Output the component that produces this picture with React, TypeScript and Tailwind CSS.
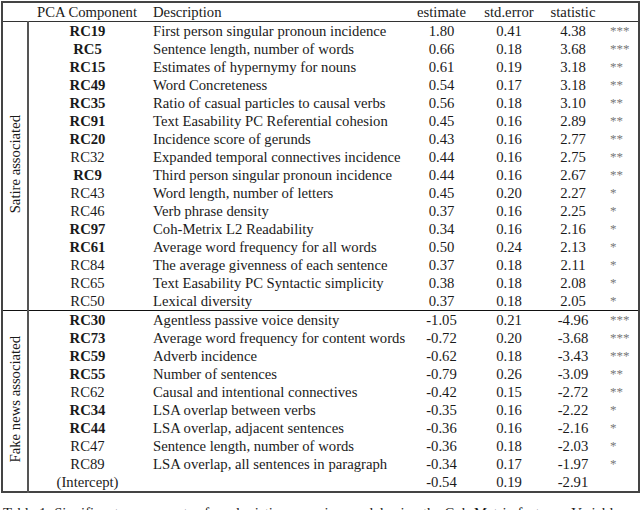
import React from 'react';

type Row = [string, boolean, string, string, string, string, string];

const satire: Row[] = [
  ['RC19', true, 'First person singular pronoun incidence', '1.80', '0.41', '4.38', '***'],
  ['RC5', true, 'Sentence length, number of words', '0.66', '0.18', '3.68', '***'],
  ['RC15', true, 'Estimates of hypernymy for nouns', '0.61', '0.19', '3.18', '**'],
  ['RC49', true, 'Word Concreteness', '0.54', '0.17', '3.18', '**'],
  ['RC35', true, 'Ratio of casual particles to causal verbs', '0.56', '0.18', '3.10', '**'],
  ['RC91', true, 'Text Easability PC Referential cohesion', '0.45', '0.16', '2.89', '**'],
  ['RC20', true, 'Incidence score of gerunds', '0.43', '0.16', '2.77', '**'],
  ['RC32', false, 'Expanded temporal connectives incidence', '0.44', '0.16', '2.75', '**'],
  ['RC9', true, 'Third person singular pronoun incidence', '0.44', '0.16', '2.67', '**'],
  ['RC43', false, 'Word length, number of letters', '0.45', '0.20', '2.27', '*'],
  ['RC46', false, 'Verb phrase density', '0.37', '0.16', '2.25', '*'],
  ['RC97', true, 'Coh-Metrix L2 Readability', '0.34', '0.16', '2.16', '*'],
  ['RC61', true, 'Average word frequency for all words', '0.50', '0.24', '2.13', '*'],
  ['RC84', false, 'The average givenness of each sentence', '0.37', '0.18', '2.11', '*'],
  ['RC65', false, 'Text Easability PC Syntactic simplicity', '0.38', '0.18', '2.08', '*'],
  ['RC50', false, 'Lexical diversity', '0.37', '0.18', '2.05', '*'],
];

const fake: Row[] = [
  ['RC30', true, 'Agentless passive voice density', '-1.05', '0.21', '-4.96', '***'],
  ['RC73', true, 'Average word frequency for content words', '-0.72', '0.20', '-3.68', '***'],
  ['RC59', true, 'Adverb incidence', '-0.62', '0.18', '-3.43', '***'],
  ['RC55', true, 'Number of sentences', '-0.79', '0.26', '-3.09', '**'],
  ['RC62', false, 'Causal and intentional connectives', '-0.42', '0.15', '-2.72', '**'],
  ['RC34', true, 'LSA overlap between verbs', '-0.35', '0.16', '-2.22', '*'],
  ['RC44', true, 'LSA overlap, adjacent sentences', '-0.36', '0.16', '-2.16', '*'],
  ['RC47', false, 'Sentence length, number of words', '-0.36', '0.18', '-2.03', '*'],
  ['RC89', false, 'LSA overlap, all sentences in paragraph', '-0.34', '0.17', '-1.97', '*'],
  ['(Intercept)', false, '', '-0.54', '0.19', '-2.91', ''],
];

const Group = ({ label, rows, top }: { label: string; rows: Row[]; top?: boolean }) => (
  <>
    {rows.map((r, i) => (
      <tr key={r[0]} className={`h-[18px] ${i === 0 && top ? 'border-t-[1.5px] border-[#111]' : ''}`}>
        {i === 0 && (
          <td rowSpan={rows.length} className="border-r-2 border-[#555] p-0 text-center align-middle">
            <span className="inline-block rotate-180 [writing-mode:vertical-rl]">{label}</span>
          </td>
        )}
        <td className={`p-0 text-center ${r[1] ? 'font-bold' : ''}`}>{r[0]}</td>
        <td className="whitespace-nowrap p-0 pl-[7px]">{r[2]}</td>
        <td className="p-0 text-center">{r[3]}</td>
        <td className="p-0 text-center">{r[4]}</td>
        <td className="p-0 text-center">{r[5]}</td>
        <td className="p-0 pl-[7px] text-left text-[13px] text-[#777]">{r[6]}</td>
      </tr>
    ))}
  </>
);

export default function App() {
  return (
    <div className="h-[510px] w-[640px] overflow-hidden bg-white pl-px pt-px font-['Liberation_Serif',serif] text-[14.7px] leading-[18px] text-[#1a1a1a]">
      <table className="w-[637px] table-fixed border-collapse border-2 border-[#444]">
        <colgroup>
          <col className="w-[26px]" />
          <col className="w-[118px]" />
          <col className="w-[262px]" />
          <col className="w-[67px]" />
          <col className="w-[68px]" />
          <col className="w-[60px]" />
          <col className="w-[36px]" />
        </colgroup>
        <thead>
          <tr className="h-[18px] border-b border-[#333]">
            <th className="p-0 font-normal"></th>
            <th className="p-0 text-center font-normal">PCA Component</th>
            <th className="p-0 pl-[7px] text-left font-normal">Description</th>
            <th className="p-0 text-center font-normal">estimate</th>
            <th className="p-0 text-center font-normal">std.error</th>
            <th className="p-0 text-center font-normal">statistic</th>
            <th className="p-0 font-normal"></th>
          </tr>
        </thead>
        <tbody>
          <Group label="Satire associated" rows={satire} />
          <Group label="Fake news associated" rows={fake} top />
        </tbody>
      </table>
      <p className="mt-[11px] whitespace-nowrap pl-[2px]">
        Table 1: Significant components of our logistic regression model using the Coh-Metrix features. Variables are also sorted
      </p>
    </div>
  );
}
